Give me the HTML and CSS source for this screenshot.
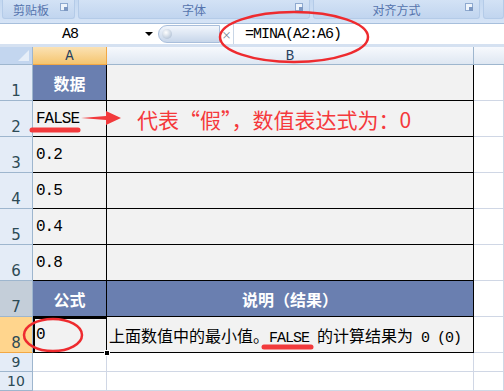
FILE: index.html
```html
<!DOCTYPE html>
<html lang="zh-CN">
<head>
    <meta charset="UTF-8">
    <title>MINA</title>
    <link rel="stylesheet" href="styles.css">
</head>
<body>
    <div class="ribbon">
        <div class="group g1"><span>剪贴板</span><i class="launcher"></i></div>
        <div class="group g2"><span>字体</span><i class="launcher"></i></div>
        <div class="group g3"><span>对齐方式</span><i class="launcher"></i></div>
        <div class="group g4"></div>
    </div>

    <div class="fbar">
        <div class="namebox">
            <span class="mono">A8</span>
            <i class="drop"></i>
        </div>
        <div class="gadget"><i class="knob"></i></div>
        <div class="fx">×</div>
        <div class="formula mono">=MINA(A2:A6)</div>
    </div>

    <div class="sheet">
        <div class="corner"></div>
        <div class="ch sel">A</div>
        <div class="ch">B</div>
        <div class="ch last"></div>

        <div class="rh">1</div>
        <div class="c h">数据</div>
        <div class="c d"></div>
        <div class="c"></div>

        <div class="rh">2</div>
        <div class="c d mono v">FALSE</div>
        <div class="c d note">代表“假”，数值表达式为：0</div>
        <div class="c"></div>

        <div class="rh">3</div>
        <div class="c d mono v">0.2</div>
        <div class="c d"></div>
        <div class="c"></div>

        <div class="rh">4</div>
        <div class="c d mono v">0.5</div>
        <div class="c d"></div>
        <div class="c"></div>

        <div class="rh">5</div>
        <div class="c d mono v">0.4</div>
        <div class="c d"></div>
        <div class="c"></div>

        <div class="rh">6</div>
        <div class="c d mono v">0.8</div>
        <div class="c d"></div>
        <div class="c"></div>

        <div class="rh hover">7</div>
        <div class="c h">公式</div>
        <div class="c h">说明（结果）</div>
        <div class="c"></div>

        <div class="rh active">8</div>
        <div class="c d active mono v">0<i class="handle"></i></div>
        <div class="c d text"><span>上面数值中的最小值。<span class="mono">FALSE </span>的计算结果为<span class="mono"> 0 (0)</span></span></div>
        <div class="c"></div>

        <div class="rh small">9</div>
        <div class="c"></div>
        <div class="c"></div>
        <div class="c"></div>

        <div class="rh small">10</div>
        <div class="c"></div>
        <div class="c"></div>
        <div class="c"></div>
    </div>

    <svg class="marks" width="504" height="391" viewBox="0 0 504 391">
        <ellipse cx="294" cy="37" rx="74" ry="25" fill="none" stroke="#ee2b2f" stroke-width="2.5"/>
        <ellipse cx="53" cy="335" rx="29" ry="16" fill="none" stroke="#ee2b2f" stroke-width="2.5"/>
        <path d="M32 130 L78 130" stroke="#f23a3c" stroke-width="5" stroke-linecap="round"/>
        <path d="M264 347 L311 347" stroke="#f23a3c" stroke-width="5" stroke-linecap="round"/>
        <path d="M81 118 L106 116 L106 111 L121 118 L106 125 L106 120 Z" fill="#f23a3c"/>
    </svg>
</body>
</html>
```

FILE: styles.css
```css
* {
    margin: 0;
    padding: 0;
    box-sizing: border-box;
}

body {
    width: 504px;
    height: 391px;
    overflow: hidden;
    position: relative;
    background: #fff;
    font-family: "Noto Sans CJK SC", sans-serif;
    color: #000;
}

.mono {
    font-family: "Liberation Mono", "Noto Sans CJK SC", monospace;
    font-size: 15px;
    letter-spacing: -1px;
}

/* ribbon group labels */
.ribbon {
    height: 23px;
    display: flex;
    gap: 3px;
    padding: 0 0 4px 2px;
    background: linear-gradient(#c4d8f1, #d6e4f6);
}

.group {
    position: relative;
    height: 19px;
    display: flex;
    align-items: center;
    justify-content: center;
    background: linear-gradient(#d3e2f5, #c1d5ef);
    border: 1px solid #b4cbe8;
    border-top: none;
    border-radius: 0 0 3px 3px;
    color: #5574ad;
    font-size: 12px;
}

.g1 { width: 73px; justify-content: flex-start; padding-left: 10px; }
.g2 { width: 232px; }
.g3 { width: 167px; }
.g4 { flex: 1; }

.launcher {
    position: absolute;
    right: 6px;
    top: 3px;
    width: 8px;
    height: 8px;
    border: 1px solid #8ea9cf;
    background: #eef4fb;
}

.launcher::after {
    content: "";
    position: absolute;
    right: -1px;
    bottom: -1px;
    width: 4px;
    height: 4px;
    background: #7d98c2;
}

/* formula bar */
.fbar {
    height: 24px;
    display: flex;
    align-items: center;
    background: #fff;
    border-top: 1px solid #a7bfdc;
    border-bottom: 3px solid #d5e1f1;
}

.namebox {
    width: 158px;
    height: 100%;
    display: flex;
    align-items: center;
    justify-content: center;
    padding-right: 18px;
    position: relative;
}

.drop {
    position: absolute;
    right: 5px;
    top: 8px;
    border-left: 4px solid transparent;
    border-right: 4px solid transparent;
    border-top: 4px solid #000;
}

.gadget {
    width: 62px;
    height: 18px;
    border-radius: 9px 0 0 9px;
    background: linear-gradient(#f2f6fc, #c7d6ea);
    border: 1px solid #a9bedb;
    display: flex;
    align-items: center;
    padding-left: 3px;
}

.knob {
    width: 10px;
    height: 10px;
    border-radius: 50%;
    background: radial-gradient(circle at 40% 35%, #fff, #9fb3cc);
}

.fx {
    width: 14px;
    color: #6d7d90;
    font-size: 10px;
    text-align: center;
    border-right: 1px solid #c9d6e6;
    height: 100%;
    line-height: 22px;
}

.formula {
    padding-left: 11px;
}

/* worksheet */
.sheet {
    display: grid;
    grid-template-columns: 33px 74px 367px 30px;
    grid-template-rows: 18px repeat(8, 36px) 19px 19px;
}

.corner {
    background: #c3d6ef;
    border-right: 1px solid #9eb6ce;
    border-bottom: 1px solid #9eb6ce;
    position: relative;
}

.corner::after {
    content: "";
    position: absolute;
    right: 3px;
    bottom: 3px;
    border-left: 11px solid transparent;
    border-bottom: 11px solid #e6eef8;
}

.ch {
    background: linear-gradient(#f7f9fd, #dee7f2);
    border-right: 1px solid #9eb6ce;
    border-bottom: 1px solid #9eb6ce;
    display: flex;
    align-items: center;
    justify-content: center;
    font-family: "Liberation Mono", monospace;
    font-size: 14px;
    color: #27415f;
}

.ch.sel {
    background: linear-gradient(#fbe2b4, #f5c56f);
    border-right-color: #f2a845;
    border-bottom-color: #f2a845;
}

.ch.last {
    border-right: none;
}

.rh {
    background: #e4ecf7;
    border-right: 1px solid #9eb6ce;
    border-bottom: 1px solid #9eb6ce;
    display: flex;
    align-items: flex-end;
    justify-content: center;
    font-family: "DejaVu Sans", sans-serif;
    font-size: 15px;
    line-height: 18px;
    color: #2c4a55;
}

.rh.hover {
    background: #c4ced9;
}

.rh.active {
    background: #ffd58d;
    border-bottom-color: #f2a845;
}

.rh.small {
    font-size: 14px;
    line-height: 17px;
}

.c {
    border-right: 1px solid #d0d7e5;
    border-bottom: 1px solid #d0d7e5;
    display: flex;
    align-items: center;
    font-size: 16px;
}

.c.d {
    background: #f2f2f2;
    border-right-color: #000;
    border-bottom-color: #000;
}

.c.h {
    background: #6a7fb0;
    border-right: 1px solid #000;
    border-bottom: 1px solid #000;
    justify-content: center;
    color: #fff;
    font-weight: bold;
    font-size: 16px;
}

.c.v {
    padding-left: 3px;
}

.note {
    padding-left: 30px;
    color: #f5393c;
    font-size: 21px;
}

.text {
    padding-left: 2px;
    white-space: pre;
}

.c.active {
    position: relative;
    box-shadow: inset 2px 2px 0 #000;
}

.handle {
    position: absolute;
    right: -4px;
    bottom: -4px;
    width: 6px;
    height: 6px;
    background: #000;
    border: 1px solid #fff;
}

.marks {
    position: absolute;
    left: 0;
    top: 0;
    pointer-events: none;
}
```
